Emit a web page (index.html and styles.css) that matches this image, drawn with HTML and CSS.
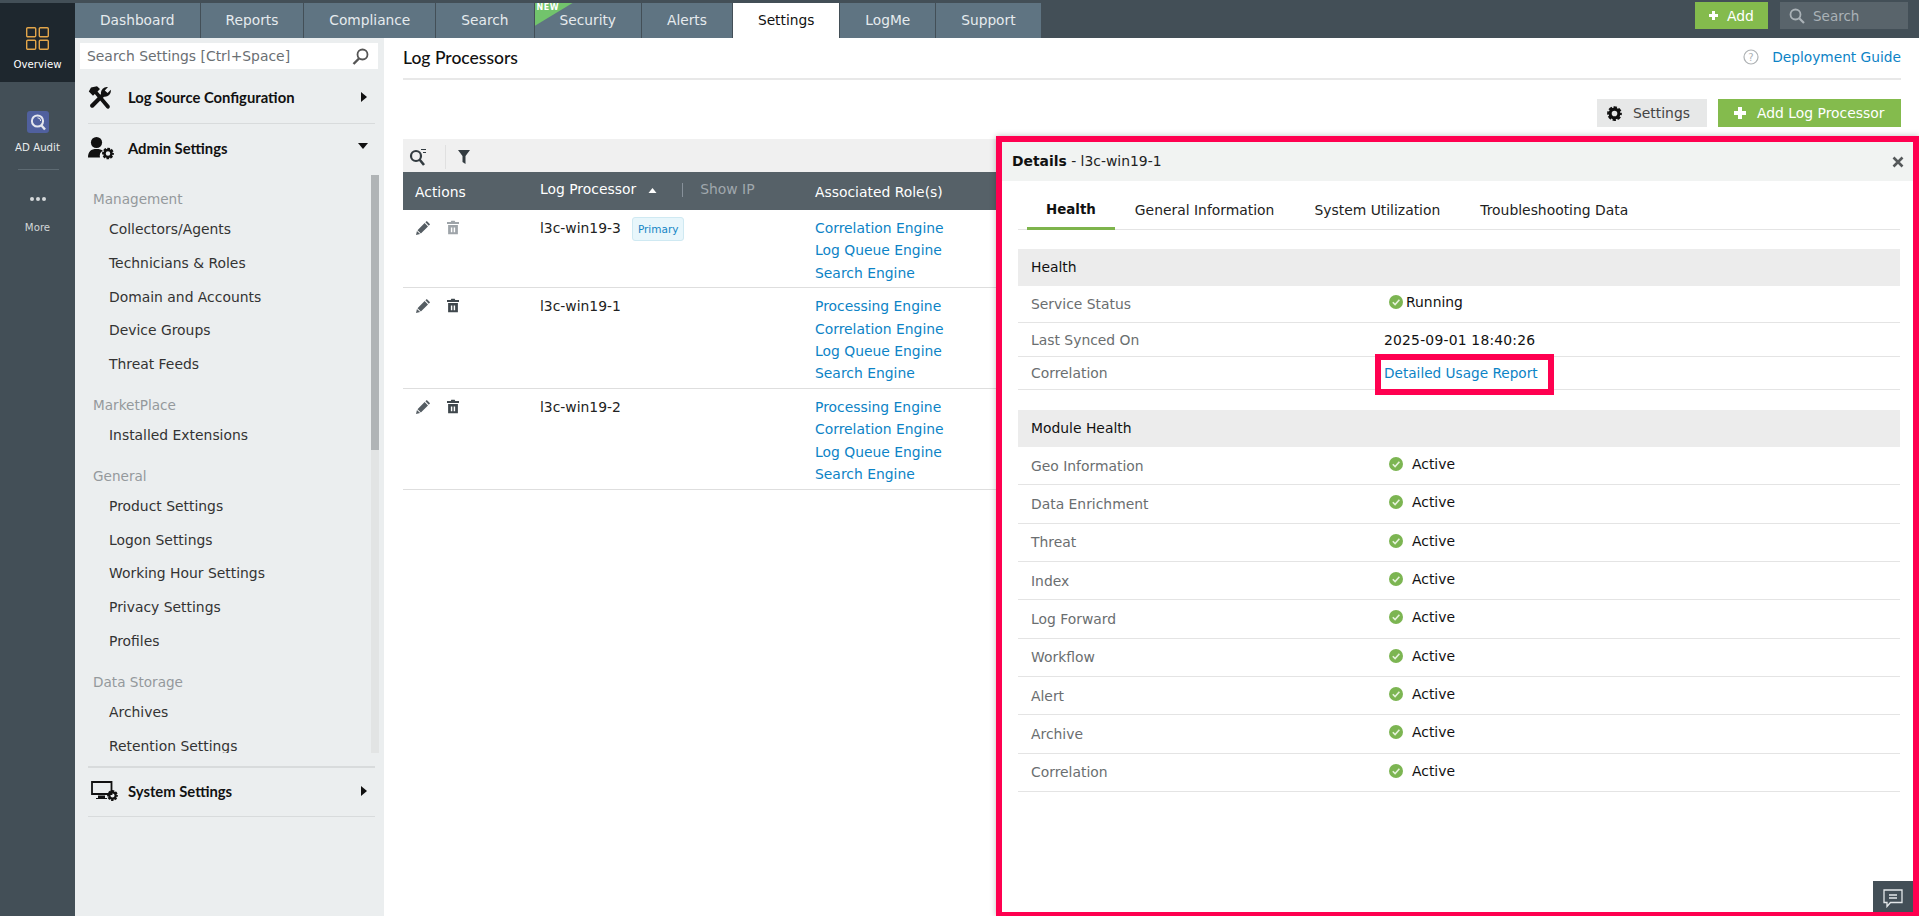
FILE: index.html
```html
<!DOCTYPE html>
<html lang="en">
<head>
<meta charset="utf-8">
<title>Log Processors</title>
<link rel="stylesheet" href="styles.css">
</head>
<body>
<svg class="defs" width="0" height="0">
  <defs>
    <symbol id="gear" viewBox="0 0 24 24">
      <circle cx="12" cy="12" r="7" fill="none" stroke="currentColor" stroke-width="5"/>
      <circle cx="12" cy="12" r="9.8" fill="none" stroke="currentColor" stroke-width="4" stroke-dasharray="5.2 2.5" stroke-dashoffset="2.6"/>
    </symbol>
    <symbol id="pencil" viewBox="0 0 16 16">
      <path fill="currentColor" d="M11.5 1 15 4.5 13.6 6 10 2.4ZM9.2 3.2l3.6 3.6-7.6 7.6-3.6-3.6ZM1 11.6l3.4 3.4L0 16Z"/>
    </symbol>
    <symbol id="trash" viewBox="0 0 14 16">
      <path fill="currentColor" fill-rule="evenodd" d="M5 0h4l.6 1.5H14V4H0V1.5h4.4ZM1.3 5h11.4v11H1.3ZM4.5 8v5.5h1.7V8Zm3.3 0v5.5h1.7V8Z"/>
    </symbol>
    <symbol id="check" viewBox="0 0 14 14">
      <circle cx="7" cy="7" r="7" fill="#7cb552"/>
      <path d="M3.8 7.2 6.1 9.6 10.4 4.8" fill="none" stroke="#e6f2db" stroke-width="1.6"/>
    </symbol>
    <symbol id="caret-right" viewBox="0 0 6 10"><path fill="currentColor" d="M0 0 6 5 0 10Z"/></symbol>
    <symbol id="caret-down" viewBox="0 0 10 6"><path fill="currentColor" d="M0 0H10L5 6Z"/></symbol>
    <symbol id="plus" viewBox="0 0 12 12"><path fill="currentColor" d="M4 0h4v4h4v4H8v4H4V8H0V4h4Z"/></symbol>
  </defs>
</svg>

<div class="app">
  <nav class="rail">
    <a class="rail-item rail-active">
      <svg class="rail-grid" viewBox="0 0 23 23"><g fill="none" stroke="#e3a64a" stroke-width="1.4"><rect x=".7" y=".7" width="9" height="9" rx="1"/><rect x="13.3" y=".7" width="9" height="9" rx="1"/><rect x=".7" y="13.3" width="9" height="9" rx="1"/><rect x="13.3" y="13.3" width="9" height="9" rx="1"/></g></svg>
      <span>Overview</span>
    </a>
    <a class="rail-item rail-audit">
      <svg class="rail-logo" viewBox="0 0 22 22"><rect width="22" height="22" rx="3" fill="#50609e"/><circle cx="10.5" cy="10" r="5.6" fill="none" stroke="#e4e6ee" stroke-width="2"/><path d="M14.5 14.5 18 18.5" stroke="#e4e6ee" stroke-width="2.4"/><path d="M10.5 6.8a3.2 3.2 0 0 1 3.2 3.2" fill="none" stroke="#e4e6ee" stroke-width="1"/></svg>
      <span>AD Audit</span>
    </a>
    <div class="rail-rule"></div>
    <a class="rail-item rail-more">
      <span class="rail-dots"><i></i><i></i><i></i></span>
      <span class="rail-muted">More</span>
    </a>
  </nav>

  <div class="shell">
    <header class="topbar">
      <div class="tabs">
        <a class="tab">Dashboard</a>
        <a class="tab">Reports</a>
        <a class="tab">Compliance</a>
        <a class="tab">Search</a>
        <a class="tab tab-new"><span class="new-flag"></span><span class="new-text">NEW</span>Security</a>
        <a class="tab">Alerts</a>
        <a class="tab tab-on">Settings</a>
        <a class="tab">LogMe</a>
        <a class="tab">Support</a>
      </div>
      <div class="top-actions">
        <a class="add-btn"><svg class="ico-plus-sm"><use href="#plus"/></svg>Add</a>
        <div class="top-search">
          <svg class="ico-search" viewBox="0 0 16 16"><circle cx="6.5" cy="6.5" r="5" fill="none" stroke="currentColor" stroke-width="1.8"/><path d="M10.2 10.2 15 15" stroke="currentColor" stroke-width="2.2"/></svg>
          <span>Search</span>
        </div>
      </div>
    </header>

    <div class="work">
      <aside class="side">
        <div class="side-search">
          <span>Search Settings [Ctrl+Space]</span>
          <svg class="ico-find" viewBox="0 0 17 17"><circle cx="10.5" cy="6.5" r="5" fill="none" stroke="currentColor" stroke-width="1.8"/><path d="M7 10.5 1.5 16" stroke="currentColor" stroke-width="2.4"/></svg>
        </div>

        <div class="side-head side-head-a">
          <svg class="ico-tools" viewBox="0 0 24 24"><g fill="#111"><path d="M3 2 9 .8 12 3.5 9.5 6 21.5 20a2 2 0 0 1-3 2.6L6.8 8.6 5 10.2 .8 6Z"/><path d="M22.8 4.3 19.6 7.4 16.8 5 20 1.6A6 6 0 0 0 13 8.5L2.4 19a2.2 2.2 0 0 0 3 3L16 11.2a6 6 0 0 0 6.8-6.9Z"/></g></svg>
          <span class="side-title">Log Source Configuration</span>
          <svg class="caret-r"><use href="#caret-right"/></svg>
        </div>

        <div class="side-head side-head-b">
          <svg class="ico-admin" viewBox="0 0 26 24"><circle cx="8.5" cy="7" r="5.6" fill="#111"/><path fill="#111" d="M0 22c0-6 3-8.500 8.500-8.500 3 0 5 .6 6.300 1.800A6 6 0 0 0 12 22Z"/><use href="#gear" x="14" y="12" width="12" height="12" color="#111"/></svg>
          <span class="side-title">Admin Settings</span>
          <svg class="caret-d"><use href="#caret-down"/></svg>
        </div>

        <div class="side-list">
          <h4 class="group">Management</h4>
          <a class="item">Collectors/Agents</a>
          <a class="item">Technicians &amp; Roles</a>
          <a class="item">Domain and Accounts</a>
          <a class="item">Device Groups</a>
          <a class="item">Threat Feeds</a>
          <h4 class="group">MarketPlace</h4>
          <a class="item">Installed Extensions</a>
          <h4 class="group">General</h4>
          <a class="item">Product Settings</a>
          <a class="item">Logon Settings</a>
          <a class="item">Working Hour Settings</a>
          <a class="item">Privacy Settings</a>
          <a class="item">Profiles</a>
          <h4 class="group">Data Storage</h4>
          <a class="item">Archives</a>
          <a class="item">Retention Settings</a>
          <div class="side-track"><div class="side-thumb"></div></div>
        </div>

        <div class="side-head side-head-c">
          <svg class="ico-sys" viewBox="0 0 27 20"><path fill="none" stroke="#111" stroke-width="1.800" d="M1 1h19.500v12H1z"/><path fill="#111" d="M7 14.500h7V17h2v1H5v-1h2Z"/><use href="#gear" x="16" y="9" width="11" height="11" color="#111"/></svg>
          <span class="side-title">System Settings</span>
          <svg class="caret-r"><use href="#caret-right"/></svg>
        </div>
      </aside>

      <main class="main">
        <div class="page-head">
          <h1>Log Processors</h1>
          <div class="guide">
            <svg class="ico-help" viewBox="0 0 16 16"><circle cx="8" cy="8" r="7" fill="none" stroke="#aeb2b4" stroke-width="1.200"/><text x="8" y="11.500" text-anchor="middle" class="help-q">?</text></svg>
            <a class="link guide-link">Deployment Guide</a>
          </div>
        </div>

        <div class="page-actions">
          <a class="btn btn-grey"><svg class="ico-gear"><use href="#gear"/></svg>Settings</a>
          <a class="btn btn-green"><svg class="ico-plus"><use href="#plus"/></svg>Add Log Processor</a>
        </div>

        <div class="toolbar">
          <svg class="ico-qsearch" viewBox="0 0 18 18"><circle cx="7" cy="8" r="5" fill="none" stroke="#333b40" stroke-width="2.200"/><path d="M10.500 11.500 15 17" stroke="#333b40" stroke-width="2.600"/><path d="M12 1.500h5M14 4.500h3" stroke="#333b40" stroke-width="1.200"/></svg>
          <span class="tool-sep"></span>
          <svg class="ico-funnel" viewBox="0 0 12 14"><path fill="#333b40" d="M0 0h12L7.500 6v8l-3-2V6Z"/></svg>
        </div>

        <div class="grid-head">
          <div class="col-a th-low">Actions</div>
          <div class="col-b th-up">Log Processor<svg class="sort" viewBox="0 0 8 5"><path fill="#fff" d="M0 5 4 0l4 5Z"/></svg><span class="th-sep"></span><span class="show-ip">Show IP</span></div>
          <div class="col-c th-low">Associated Role(s)</div>
        </div>

        <div class="grid-row">
          <div class="col-a row-icons"><svg class="ico-edit"><use href="#pencil"/></svg><svg class="ico-del ico-del-off"><use href="#trash"/></svg></div>
          <div class="col-b"><span class="name">l3c-win19-3</span><span class="badge">Primary</span></div>
          <div class="col-c roles"><a class="link">Correlation Engine</a><a class="link">Log Queue Engine</a><a class="link">Search Engine</a></div>
        </div>
        <div class="grid-row">
          <div class="col-a row-icons"><svg class="ico-edit"><use href="#pencil"/></svg><svg class="ico-del"><use href="#trash"/></svg></div>
          <div class="col-b"><span class="name">l3c-win19-1</span></div>
          <div class="col-c roles"><a class="link">Processing Engine</a><a class="link">Correlation Engine</a><a class="link">Log Queue Engine</a><a class="link">Search Engine</a></div>
        </div>
        <div class="grid-row">
          <div class="col-a row-icons"><svg class="ico-edit"><use href="#pencil"/></svg><svg class="ico-del"><use href="#trash"/></svg></div>
          <div class="col-b"><span class="name">l3c-win19-2</span></div>
          <div class="col-c roles"><a class="link">Processing Engine</a><a class="link">Correlation Engine</a><a class="link">Log Queue Engine</a><a class="link">Search Engine</a></div>
        </div>
      </main>
    </div>
  </div>

  <section class="panel">
    <div class="panel-head">
      <span><b>Details</b> - l3c-win19-1</span>
      <svg class="ico-close" viewBox="0 0 12 12"><path d="M1.500 1.500l9 9M10.500 1.500l-9 9" stroke="#55585a" stroke-width="2.600"/></svg>
    </div>
    <div class="panel-body">
      <div class="ptabs">
        <a class="ptab ptab-on">Health</a>
        <a class="ptab">General Information</a>
        <a class="ptab">System Utilization</a>
        <a class="ptab">Troubleshooting Data</a>
      </div>

      <h3 class="sec sec-first">Health</h3>
      <div class="kv kv-37"><span class="k">Service Status</span><span class="v up"><svg class="ok ok-tight"><use href="#check"/></svg>Running</span></div>
      <div class="kv kv-34"><span class="k">Last Synced On</span><span class="v v-date">2025-09-01 18:40:26</span></div>
      <div class="kv kv-33"><span class="k">Correlation</span><span class="v"><a class="link callout">Detailed Usage Report</a></span></div>

      <h3 class="sec sec-next">Module Health</h3>
      <div class="kv"><span class="k">Geo Information</span><span class="v up"><svg class="ok"><use href="#check"/></svg>Active</span></div>
      <div class="kv"><span class="k">Data Enrichment</span><span class="v up"><svg class="ok"><use href="#check"/></svg>Active</span></div>
      <div class="kv"><span class="k">Threat</span><span class="v up"><svg class="ok"><use href="#check"/></svg>Active</span></div>
      <div class="kv"><span class="k">Index</span><span class="v up"><svg class="ok"><use href="#check"/></svg>Active</span></div>
      <div class="kv"><span class="k">Log Forward</span><span class="v up"><svg class="ok"><use href="#check"/></svg>Active</span></div>
      <div class="kv"><span class="k">Workflow</span><span class="v up"><svg class="ok"><use href="#check"/></svg>Active</span></div>
      <div class="kv"><span class="k">Alert</span><span class="v up"><svg class="ok"><use href="#check"/></svg>Active</span></div>
      <div class="kv"><span class="k">Archive</span><span class="v up"><svg class="ok"><use href="#check"/></svg>Active</span></div>
      <div class="kv"><span class="k">Correlation</span><span class="v up"><svg class="ok"><use href="#check"/></svg>Active</span></div>
    </div>
    <a class="chat">
      <svg class="ico-chat" viewBox="0 0 20 19"><path fill="none" stroke="#e4e8ea" stroke-width="1.300" d="M1 1h18v12.500H7.500L4 17.500v-4H1Z"/><path d="M6 6h8M6 9h8" stroke="#e4e8ea" stroke-width="1.300"/></svg>
    </a>
  </section>
</div>
</body>
</html>
```

FILE: styles.css
```css
* { box-sizing: border-box; }
html, body { margin: 0; height: 100%; overflow: hidden; }
body {
  font-family: "DejaVu Sans", "Liberation Sans", sans-serif;
  font-size: 13.9px;
  color: #222;
  background: #fff;
}
a { text-decoration: none; color: inherit; }
h1, h3, h4 { margin: 0; font-weight: normal; }
.defs { position: absolute; }

.app { position: relative; display: flex; width: 1919px; height: 916px; }

/* rail */
.rail { width: 75px; flex: none; background: #434f57; padding-top: 3px; }
.rail-item { display: flex; flex-direction: column; align-items: center; color: #fff; font-size: 10.2px; }
.rail-active { height: 79px; background: #1e272e; padding-top: 24px; }
.rail-grid { width: 23px; height: 23px; margin-bottom: 9px; }
.rail-audit { margin-top: 29px; color: #e8ebec; }
.rail-logo { width: 22px; height: 22px; margin-bottom: 9px; }
.rail-rule { height: 1px; background: #5d6a72; margin: 16px 16px 0 18px; }
.rail-more { margin-top: 27px; }
.rail-dots { display: flex; gap: 2px; height: 5px; margin-bottom: 20px; }
.rail-dots i { width: 4px; height: 4px; border-radius: 50%; background: #d5d9db; }
.rail-muted { color: #d2d6d8; }

/* top */
.shell { flex: 1; display: flex; flex-direction: column; min-width: 0; }
.topbar { height: 38px; flex: none; display: flex; background: #434f57; padding-right: 11px; }
.tabs { display: flex; gap: 1px; margin-top: 3px; height: 35px; }
.tab { position: relative; display: flex; align-items: center; padding: 0 25px 1px; background: #5f7482; color: #e6ebee; font-size: 13.75px; }
.tab-on { background: #fff; color: #111; }
.new-flag { position: absolute; left: 0; top: 0; width: 38px; height: 23px; background: #72c46c; clip-path: polygon(0 0, 100% 0, 0 100%); }
.new-text { position: absolute; left: 2px; top: 0; font-size: 8px; line-height: 10px; font-weight: bold; color: #fff; letter-spacing: .5px; }
.top-actions { margin-left: auto; display: flex; gap: 12px; margin-top: 2px; height: 27px; }
.add-btn { width: 73px; display: flex; align-items: center; justify-content: center; gap: 9px; background: #84bb4d; color: #fff; font-size: 13.9px; }
.ico-plus-sm { width: 9px; height: 9px; }
.top-search { width: 128px; display: flex; align-items: center; padding-left: 9px; gap: 8px; background: #59646b; color: #aab2b7; font-size: 13.5px; }
.ico-search { width: 16px; height: 16px; }

/* sidebar */
.work { flex: 1; display: flex; min-height: 0; }
.side { width: 309px; flex: none; background: #ebeeef; padding: 5px 0 0; }
.side-search { display: flex; align-items: center; justify-content: space-between; height: 26px; margin: 0 6px 0 5px; padding: 0 9px 0 7px; background: #fff; color: #6a6f73; font-size: 13.9px; }
.ico-find { width: 17px; height: 17px; color: #555; }
.side-head { display: flex; align-items: center; margin: 0 9px 0 13px; border-bottom: 1px solid #d8dbdc; position: relative; }
.side-head-a { height: 55px; padding-top: 2px; }
.side-head-b { height: 51px; border-bottom: 0; padding-bottom: 4px; }
.side-head-c { height: 51px; border-top: 2px solid #d8dbdc; margin-top: 13px; padding-bottom: 3px; }
.side-title { font-family: Lato, "Liberation Sans", sans-serif; font-weight: 700; font-size: 14.8px; color: #111; flex: 1; }
.ico-tools { width: 24px; height: 25px; margin-right: 16px; }
.ico-admin { width: 26px; height: 25px; margin-right: 14px; margin-left: 0; }
.ico-sys { width: 27px; height: 20px; margin-right: 10px; margin-left: 3px; }
.caret-r { width: 6px; height: 10px; color: #111; margin-right: 8px; }
.caret-d { width: 10px; height: 6px; color: #111; margin-right: 7px; margin-bottom: 4px; }

.side-list { position: relative; height: 578px; padding-top: 10px; overflow: hidden; }
.group { height: 28px; line-height: 28px; margin: 9px 0 0 18px; color: #94999c; font-size: 13.6px; }
.group:first-child { margin-top: 0; }
.item { display: block; height: 33.8px; line-height: 33.8px; padding-left: 34px; color: #333; font-size: 13.9px; }
.side-track { position: absolute; left: 296px; top: 0; bottom: 0; width: 8px; background: #e2e4e4; }
.side-thumb { height: 275px; background: #b0b4b6; }

/* main */
.main { flex: 1; padding: 0 18px 0 19px; min-width: 0; }
.page-head { height: 42px; display: flex; align-items: center; justify-content: space-between; border-bottom: 2px solid #e8e8e8; padding-bottom: 2px; }
.page-head h1 { font-family: Lato, "Liberation Sans", sans-serif; font-weight: 500; font-size: 17.5px; color: #111; }
.guide { display: flex; align-items: center; gap: 13px; }
.guide-link { font-size: 13.75px; }
.ico-help { width: 16px; height: 16px; }
.help-q { font-size: 10px; fill: #aeb2b4; }
.link { color: #0c83c6; }
.page-actions { display: flex; justify-content: flex-end; gap: 11px; margin-top: 19px; }
.btn { height: 28px; display: flex; align-items: center; font-size: 13.9px; }
.btn-grey { width: 110px; padding-left: 10px; gap: 11px; background: #e7e8e8; color: #444; }
.btn-green { width: 183px; padding-left: 16px; gap: 11px; background: #84bb4d; color: #fff; }
.ico-gear { width: 15px; height: 15px; color: #111; }
.ico-plus { width: 12px; height: 12px; }
.toolbar { height: 33px; margin-top: 12px; background: #f0f0f0; display: flex; align-items: center; padding: 2px 0 0 6px; }
.ico-qsearch { width: 18px; height: 18px; }
.tool-sep { width: 1px; height: 24px; background: #e0e0e0; margin: 0 12px 0 18px; }
.ico-funnel { width: 12px; height: 14px; }

.grid-head, .grid-row { display: grid; grid-template-columns: 137px 275px 1fr; }
.grid-head { height: 38px; background: #566168; color: #fff; }
.th-low { padding-top: 12px; }
.th-up { padding-top: 9px; display: flex; align-items: flex-start; }
.col-a { padding-left: 12px; }
.sort { width: 9px; height: 5px; margin: 7px 0 0 12px; }
.th-sep { width: 1px; height: 14px; background: #87919a; margin: 2px 17px 0 25px; }
.show-ip { color: #a0a8ad; }
.grid-row { padding: 7px 0 3.5px; border-bottom: 1px solid #dedede; line-height: 22.3px; }
.row-icons { display: flex; gap: 16px; padding-left: 13px; padding-top: 3px; }
.ico-edit { width: 15px; height: 15px; color: #555d63; }
.ico-del { width: 12px; height: 15px; color: #3f474c; }
.ico-del-off { color: #9ea4a9; }
.name { color: #222; }
.badge { display: inline-block; margin-left: 11px; padding: 0 5px; height: 24px; line-height: 22px; font-size: 10.5px; color: #1585c5; background: #e8f6fb; border: 1px solid #cfe9f2; border-radius: 3px; vertical-align: top; }
.roles { display: flex; flex-direction: column; }

/* panel */
.panel { position: absolute; left: 996px; top: 136px; width: 923px; height: 780px; background: #fff; border: solid #ff0050; border-width: 6px 6px 4px; box-shadow: 0 0 6px rgba(0,0,0,.25); }
.panel-head { height: 39px; display: flex; align-items: center; justify-content: space-between; padding: 0 9px 2px 10px; background: #f1f3f2; color: #222; }
.panel-head b { color: #111; }
.ico-close { width: 12px; height: 12px; margin-top: 2px; }
.panel-body { padding: 0 13px 0 16px; }
.ptabs { display: flex; height: 49px; padding-left: 9px; border-bottom: 1px solid #e4e4e4; }
.ptab { height: 49px; line-height: 58px; padding: 0 20px; color: #222; }
.ptab-on { font-weight: bold; font-size: 13.4px; padding: 0 19px; color: #111; border-bottom: 3px solid #7eb44c; }
.sec { height: 37px; line-height: 37px; padding-left: 13px; background: #ececec; color: #111; font-size: 13.9px; }
.sec-first { margin-top: 19px; }
.sec-next { margin-top: 20px; }
.kv { display: grid; grid-template-columns: 366px 1fr; align-items: center; height: 38.35px; border-bottom: 1px solid #e4e4e4; }
.kv-37 { height: 37px; }
.kv-34 { height: 34px; }
.kv-33 { height: 33px; }
.k { padding-left: 13px; color: #6a6e70; }
.v { color: #111; }
.v-date { letter-spacing: .2px; }
.up { display: flex; align-items: center; padding-bottom: 3.5px; }
.ok { width: 14px; height: 14px; margin: 0 9px 0 5px; }
.ok-tight { margin-right: 3px; }
.callout { position: relative; display: inline-block; line-height: 20px; font-size: 13.65px; }
.callout::after { content: ""; position: absolute; left: -9px; right: -16px; top: -9px; bottom: -12px; border: 6px solid #ff0050; }
.chat { position: absolute; right: 0; bottom: 0; width: 40px; height: 31px; display: flex; align-items: center; justify-content: center; background: #434f57; }
.ico-chat { width: 20px; height: 19px; margin-top: 4px; }
```
